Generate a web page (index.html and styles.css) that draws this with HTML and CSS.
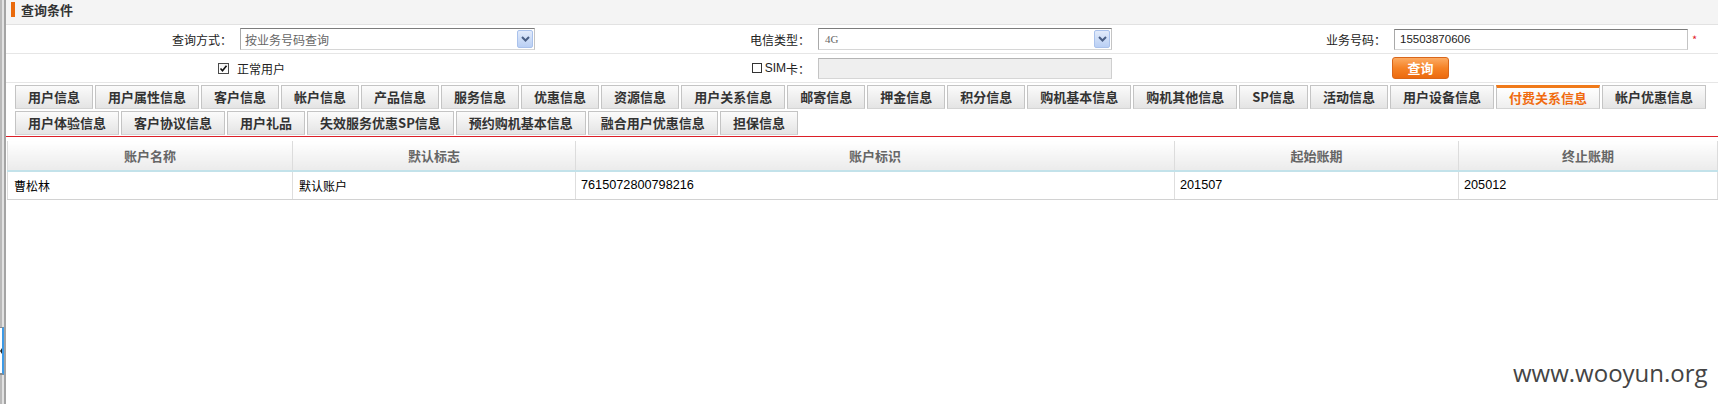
FILE: index.html
```html
<!DOCTYPE html>
<html lang="zh-CN">
<head>
<meta charset="utf-8">
<title>查询条件</title>
<link rel="stylesheet" href="styles.css">
</head>
<body>
<div class="page">
  <div class="side">
    <div class="handle"><span class="handle-arrow"></span></div>
  </div>
  <div class="main">
    <div class="title-bar"><span class="mark"></span><span class="title">查询条件</span></div>

    <div class="form-row">
      <div class="lbl">查询方式：</div>
      <div class="val">
        <div class="select"><span class="sel-text">按业务号码查询</span><span class="arrow"><svg width="9" height="6" viewBox="0 0 9 6"><path d="M1 1 L4.5 4.5 L8 1" fill="none" stroke="#4a5f86" stroke-width="2"/></svg></span></div>
      </div>
      <div class="lbl">电信类型：</div>
      <div class="val">
        <div class="select sel-4g"><span class="sel-text serif">4G</span><span class="arrow"><svg width="9" height="6" viewBox="0 0 9 6"><path d="M1 1 L4.5 4.5 L8 1" fill="none" stroke="#4a5f86" stroke-width="2"/></svg></span></div>
      </div>
      <div class="lbl">业务号码：</div>
      <div class="val">
        <div class="input"><span class="num-sm">15503870606</span></div><span class="star">*</span>
      </div>
    </div>

    <div class="form-row">
      <div class="check-cell">
        <span class="cbox checked"><svg width="9" height="9" viewBox="0 0 9 9"><path d="M1.5 4.5 L3.5 6.8 L7.5 1.8" fill="none" stroke="#111" stroke-width="1.6"/></svg></span>
        <span>正常用户</span>
      </div>
      <div class="lbl lbl-check"><span class="cbox"></span><span class="latin">SIM</span><span>卡：</span></div>
      <div class="val"><div class="input disabled"></div></div>
      <div class="lbl"></div>
      <div class="val"><button class="btn" type="button">查询</button></div>
    </div>

    <div class="tabs">
      <div class="tab-row">
        <span class="tab">用户信息</span>
        <span class="tab">用户属性信息</span>
        <span class="tab">客户信息</span>
        <span class="tab">帐户信息</span>
        <span class="tab">产品信息</span>
        <span class="tab">服务信息</span>
        <span class="tab">优惠信息</span>
        <span class="tab">资源信息</span>
        <span class="tab">用户关系信息</span>
        <span class="tab">邮寄信息</span>
        <span class="tab">押金信息</span>
        <span class="tab">积分信息</span>
        <span class="tab">购机基本信息</span>
        <span class="tab">购机其他信息</span>
        <span class="tab">SP信息</span>
        <span class="tab">活动信息</span>
        <span class="tab">用户设备信息</span>
        <span class="tab active">付费关系信息</span>
        <span class="tab">帐户优惠信息</span>
      </div>
      <div class="tab-row">
        <span class="tab">用户体验信息</span>
        <span class="tab">客户协议信息</span>
        <span class="tab">用户礼品</span>
        <span class="tab">失效服务优惠SP信息</span>
        <span class="tab">预约购机基本信息</span>
        <span class="tab">融合用户优惠信息</span>
        <span class="tab">担保信息</span>
      </div>
    </div>

    <table class="grid">
      <colgroup>
        <col class="c1"><col class="c2"><col class="c3"><col class="c4"><col>
      </colgroup>
      <thead>
        <tr><th>账户名称</th><th>默认标志</th><th>账户标识</th><th>起始账期</th><th>终止账期</th></tr>
      </thead>
      <tbody>
        <tr><td>曹松林</td><td>默认账户</td><td class="num">7615072800798216</td><td class="num">201507</td><td class="num">205012</td></tr>
      </tbody>
    </table>
  </div>
</div>
<div class="watermark">www.wooyun.org</div>
</body>
</html>
```

FILE: styles.css
```css
* { box-sizing: border-box; }
html, body { margin: 0; padding: 0; }
body {
  width: 1718px;
  height: 404px;
  overflow: hidden;
  background: #fff;
  font-family: "Noto Sans CJK SC", "Liberation Sans", sans-serif;
  font-size: 12px;
  color: #222;
  position: relative;
}
.page { display: flex; height: 404px; }

.side {
  width: 6px;
  flex: none;
  background: #e2e2e2;
  border-left: 2px solid #b9b9b9;
  border-right: 2px solid #a4a4a4;
  position: relative;
}
.handle {
  position: absolute;
  left: -2px;
  top: 327px;
  width: 4px;
  height: 48px;
  background: #fff;
  border-top: 1px solid #8a8a8a;
  border-bottom: 2px solid #8a8a8a;
  border-right: 2px solid #3d9ae6;
}
.handle-arrow {
  position: absolute;
  left: 0;
  top: 20px;
  width: 0;
  height: 0;
  border-top: 3px solid transparent;
  border-bottom: 3px solid transparent;
  border-right: 2px solid #222;
}

.main { flex: 1; min-width: 0; }

.title-bar {
  height: 25px;
  background: #f4f4f4;
  border-bottom: 1px solid #e2e2e2;
  display: flex;
  align-items: flex-start;
  padding: 2px 0 0 5px;
  gap: 6px;
}
.mark { width: 4px; height: 15px; background: #ea6a0c; }
.title { font-size: 13px; font-weight: bold; line-height: 15px; color: #333; }

.form-row {
  display: grid;
  grid-template-columns: 228px 351px 227px 349px 227px 1fr;
  height: 29px;
  border-bottom: 1px solid #e6e6e6;
  align-items: center;
}
.lbl { text-align: right; padding-right: 2px; color: #222; white-space: nowrap; }
.val { padding-left: 6px; display: flex; align-items: center; }

.select {
  width: 295px;
  height: 22px;
  border: 1px solid;
  border-color: #7c7c7c #c4c4c4 #d6d6d6 #a9a9a9;
  display: flex;
  align-items: center;
  padding-left: 4px;
  background: #fff;
}
.sel-4g { width: 294px; }
.sel-text { color: #666; }
.serif { font-family: "Liberation Serif", serif; font-size: 11px; padding-left: 2px; }
.arrow {
  margin-left: auto;
  margin-right: 1px;
  width: 16px;
  height: 18px;
  border: 1px solid #aac2ec;
  border-radius: 2px;
  background: linear-gradient(#e2ebfb, #b9cff4);
  display: flex;
  align-items: center;
  justify-content: center;
}

.input {
  width: 294px;
  height: 21px;
  border: 1px solid;
  border-color: #7c7c7c #c4c4c4 #d6d6d6 #a9a9a9;
  background: #fff;
  display: flex;
  align-items: center;
  padding-left: 5px;
}
.input.disabled { background: #efefef; border-color: #b4b4b4 #cfcfcf #d6d6d6 #c4c4c4; }
.num-sm { font-family: "Liberation Sans", sans-serif; font-size: 11.5px; color: #222; }
.star { color: #e3222c; font-size: 11px; margin-left: 4px; }

.check-cell {
  grid-column: 1 / 3;
  padding-left: 212px;
  display: flex;
  align-items: center;
  gap: 8px;
}
.cbox {
  width: 11px;
  height: 11px;
  border: 1px solid #4a4a4a;
  background: linear-gradient(#f4f4f4, #fff);
  display: inline-flex;
  align-items: center;
  justify-content: center;
}
.lbl-check { display: flex; justify-content: flex-end; align-items: center; }
.lbl-check .cbox { width: 10px; height: 10px; border-color: #333; background: #fff; margin-right: 3px; }
.latin { font-family: "Liberation Sans", sans-serif; font-size: 12px; }

.btn {
  margin-left: -2px;
  width: 57px;
  height: 22px;
  border: 1px solid #d9661a;
  border-radius: 3px;
  background: linear-gradient(#fcab63, #f58226 50%, #ec6a0e);
  color: #fff;
  font-family: "Noto Sans CJK SC", sans-serif;
  font-size: 13px;
  font-weight: bold;
  line-height: 18px;
  padding: 0;
}

.tabs {
  padding: 2px 0 1px 9px;
  border-bottom: 1px solid #dc1f28;
}
.tab-row { display: flex; gap: 2px; }
.tab-row + .tab-row { margin-top: 2px; }
.tab {
  height: 24px;
  padding: 0 12px;
  border: 1px solid #c4c4c4;
  border-bottom-color: #d4d4d4;
  background: linear-gradient(#fbfbfb, #e4e4e4);
  font-size: 13px;
  font-weight: bold;
  line-height: 22px;
  color: #333;
  white-space: nowrap;
}
.tab.active {
  border-top: 3px solid #f07a1a;
  line-height: 20px;
  color: #f06b10;
  background: linear-gradient(#fff, #eeeeee);
}

.grid {
  margin: 4px 0 0 1px;
  width: calc(100% - 1px);
  border-collapse: collapse;
  table-layout: fixed;
  border-left: 1px solid #dcdcdc;
}
.c1 { width: 285px; }
.c2 { width: 283px; }
.c3 { width: 599px; }
.c4 { width: 284px; }
.grid th {
  height: 30px;
  font-size: 13px;
  font-weight: bold;
  color: #666;
  background: linear-gradient(#ffffff, #ebebeb);
  border-right: 1px solid #dcdcdc;
  border-bottom: 2px solid #c3e2ea;
  text-align: center;
  padding: 0;
}
.grid td {
  height: 28px;
  padding: 0 6px;
  font-size: 12px;
  color: #000;
  border-right: 1px solid #dedede;
  border-bottom: 1px solid #d2d2d2;
}
.grid td.num { font-family: "Liberation Sans", sans-serif; font-size: 12.7px; padding-left: 5px; }

.watermark {
  position: absolute;
  left: 1513px;
  top: 361px;
  font-family: "Open Sans", sans-serif;
  font-size: 24px;
  line-height: 24px;
  color: #444;
}
```
